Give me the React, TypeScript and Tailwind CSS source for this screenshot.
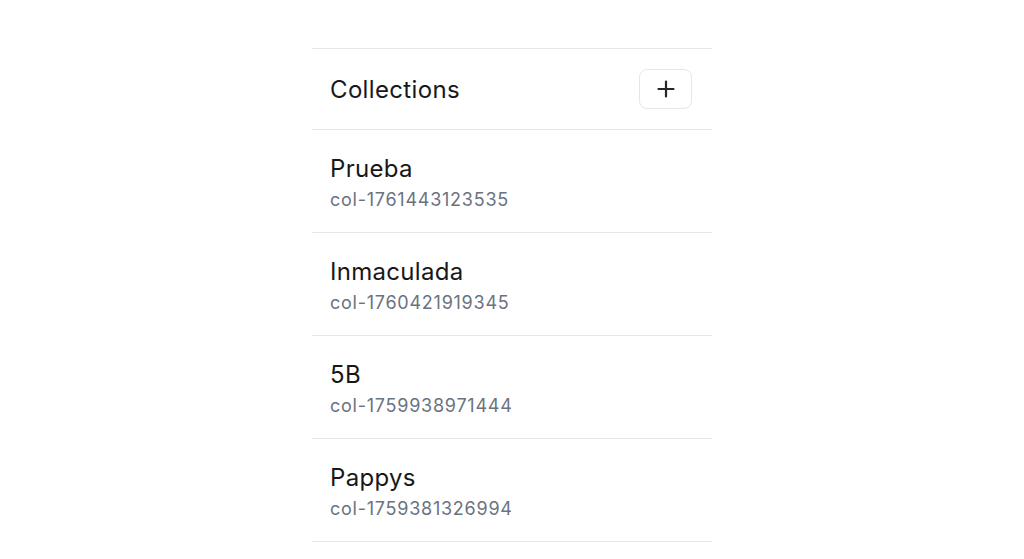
import React from "react";

const items = [
  { name: "Prueba", id: "col-1761443123535" },
  { name: "Inmaculada", id: "col-1760421919345" },
  { name: "5B", id: "col-1759938971444" },
  { name: "Pappys", id: "col-1759381326994" },
];

export default function App() {
  return (
    <div
      className="min-h-[559px] w-full bg-white flex justify-center"
      style={{ fontFamily: "Inter, 'Noto Sans', sans-serif" }}
    >
      <div className="w-[400px] mt-[48px] border-t border-[#e5e7eb]">
        <div className="h-[81px] flex items-center justify-between pl-[18px] pr-[20px] border-b border-[#e5e7eb]">
          <h2 className="text-[24px] leading-[24px] font-normal text-[#18181b] tracking-[0.35px] mt-[2px]">
            Collections
          </h2>
          <button className="w-[53px] h-[40px] rounded-[8px] border border-[#e5e7eb] bg-white flex items-center justify-center">
            <svg width="18" height="18" viewBox="0 0 18 18" fill="none">
              <path d="M9 1.5v15M1.5 9h15" stroke="#27272a" strokeWidth="2.2" strokeLinecap="round" />
            </svg>
          </button>
        </div>
        {items.map((it) => (
          <div
            key={it.id}
            className="pl-[18px] pt-[27px] pb-[22px] border-b border-[#e5e7eb]"
          >
            <div className="text-[24px] leading-[24px] text-[#18181b] tracking-[0.3px]">
              {it.name}
            </div>
            <div className="text-[18px] leading-[20px] text-[#6b7280] tracking-[0.75px] mt-[9px]">
              {it.id}
            </div>
          </div>
        ))}
      </div>
    </div>
  );
}
